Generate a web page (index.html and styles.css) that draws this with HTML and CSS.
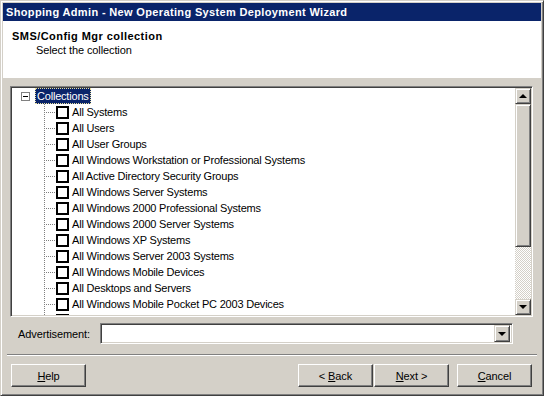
FILE: index.html
```html
<!DOCTYPE html>
<html>
<head>
<meta charset="utf-8">
<link rel="stylesheet" href="styles.css">
</head>
<body>
<div class="window">
  <div class="titlebar">Shopping Admin - New Operating System Deployment Wizard</div>
  <div class="header">
    <div class="h-title">SMS/Config Mgr collection</div>
    <div class="h-sub">Select the collection</div>
  </div>
  <div class="content">
    <div class="tree">
      <div class="tree-view">
        <div class="root-row">
          <span class="expander"><span class="minus"></span></span>
          <span class="root-label">Collections</span>
        </div>
        <ul class="children">
          <li><span class="conn"></span><span class="check"></span><span class="txt">All Systems</span></li>
          <li><span class="conn"></span><span class="check"></span><span class="txt">All Users</span></li>
          <li><span class="conn"></span><span class="check"></span><span class="txt">All User Groups</span></li>
          <li><span class="conn"></span><span class="check"></span><span class="txt">All Windows Workstation or Professional Systems</span></li>
          <li><span class="conn"></span><span class="check"></span><span class="txt">All Active Directory Security Groups</span></li>
          <li><span class="conn"></span><span class="check"></span><span class="txt">All Windows Server Systems</span></li>
          <li><span class="conn"></span><span class="check"></span><span class="txt">All Windows 2000 Professional Systems</span></li>
          <li><span class="conn"></span><span class="check"></span><span class="txt">All Windows 2000 Server Systems</span></li>
          <li><span class="conn"></span><span class="check"></span><span class="txt">All Windows XP Systems</span></li>
          <li><span class="conn"></span><span class="check"></span><span class="txt">All Windows Server 2003 Systems</span></li>
          <li><span class="conn"></span><span class="check"></span><span class="txt">All Windows Mobile Devices</span></li>
          <li><span class="conn"></span><span class="check"></span><span class="txt">All Desktops and Servers</span></li>
          <li><span class="conn"></span><span class="check"></span><span class="txt">All Windows Mobile Pocket PC 2003 Devices</span></li>
          <li><span class="conn"></span><span class="check"></span></li>
        </ul>
      </div>
      <div class="vscroll">
        <div class="sbtn"><span class="arrow-up"></span></div>
        <div class="thumb"></div>
        <div class="track"></div>
        <div class="sbtn"><span class="arrow-down"></span></div>
      </div>
    </div>
    <div class="adv-row">
      <span class="adv-label">Advertisement:</span>
      <div class="combo">
        <div class="combo-field"></div>
        <div class="combo-btn"><span class="arrow-down"></span></div>
      </div>
    </div>
  </div>
  <div class="sep"></div>
  <div class="buttons">
    <button class="btn"><u>H</u>elp</button>
    <span class="spacer"></span>
    <button class="btn">&lt; <u>B</u>ack</button>
    <button class="btn btn-next"><u>N</u>ext &gt;</button>
    <button class="btn btn-cancel"><u>C</u>ancel</button>
  </div>
</div>
</body>
</html>
```
FILE: styles.css
```css
html, body {
  margin: 0;
  padding: 0;
  background: #d4d0c8;
}

.window {
  width: 544px;
  height: 396px;
  box-sizing: border-box;
  background: #d4d0c8;
  border: 1px solid;
  border-color: #d4d0c8 #404040 #404040 #d4d0c8;
  box-shadow: inset 1px 1px #fff, inset -1px -1px #808080;
  padding: 2px;
  display: flex;
  flex-direction: column;
  font-family: "Liberation Sans", Arial, sans-serif;
  font-size: 11px;
  color: #000;
  overflow: hidden;
}

.titlebar {
  height: 18px;
  line-height: 18px;
  background: #0a246a;
  color: #fff;
  font-weight: bold;
  padding-left: 3px;
  white-space: nowrap;
  letter-spacing: 0.35px;
  flex: none;
}

.header {
  height: 57px;
  box-sizing: border-box;
  background: #fff;
  padding: 8px 0 0 9px;
  flex: none;
}

.h-title {
  font-weight: bold;
  line-height: 14px;
  letter-spacing: 0.45px;
}

.h-sub {
  line-height: 14px;
  padding-left: 24px;
  letter-spacing: -0.1px;
}

.content {
  padding: 8px 0 0 7px;
  flex: none;
}

.tree {
  width: 523px;
  height: 231px;
  box-sizing: border-box;
  border: 1px solid;
  border-color: #808080 #fff #fff #808080;
  box-shadow: inset 1px 1px #404040, inset -1px -1px #d4d0c8;
  padding: 1px;
  display: flex;
  background: #fff;
}

.tree-view {
  flex: 1;
  overflow: hidden;
  background: #fff;
  letter-spacing: -0.2px;
}

.root-row {
  height: 16px;
  display: flex;
  align-items: center;
}

.expander {
  width: 9px;
  height: 9px;
  box-sizing: border-box;
  border: 1px solid #808080;
  background: #fff;
  margin-left: 9px;
  display: flex;
  align-items: center;
  justify-content: center;
}

.minus {
  width: 5px;
  height: 1px;
  background: #000;
}

.root-label {
  margin-left: 5px;
  height: 16px;
  line-height: 14px;
  box-sizing: border-box;
  padding: 0 1px;
  background: #0a246a;
  color: #fff;
  border: 1px dotted #e8e0a0;
}

.children {
  list-style: none;
  margin: 0;
  padding: 0 0 0 32px;
}

.children li {
  height: 16px;
  display: flex;
  align-items: center;
  white-space: nowrap;
}

.conn {
  width: 12px;
  height: 16px;
  flex: none;
  background-image:
    repeating-linear-gradient(to bottom, #808080 0 1px, transparent 1px 2px),
    repeating-linear-gradient(to right, #808080 0 1px, transparent 1px 2px);
  background-size: 1px 100%, 9px 1px;
  background-position: 0 0, 2px 8px;
  background-repeat: no-repeat;
}

.check {
  width: 13px;
  height: 13px;
  box-sizing: border-box;
  border: 2px solid #000;
  background: #fff;
  flex: none;
}

.txt {
  margin-left: 3px;
  line-height: 16px;
}

.vscroll {
  width: 16px;
  display: flex;
  flex-direction: column;
  flex: none;
}

.sbtn, .thumb, .combo-btn {
  box-sizing: border-box;
  background: #d4d0c8;
  border: 1px solid;
  border-color: #d4d0c8 #404040 #404040 #d4d0c8;
  box-shadow: inset 1px 1px #fff, inset -1px -1px #808080;
  display: flex;
  align-items: center;
  justify-content: center;
}

.sbtn {
  height: 16px;
  flex: none;
}

.thumb {
  height: 143px;
  flex: none;
}

.track {
  flex: 1;
  background: repeating-conic-gradient(#fff 0 25%, #d4d0c8 0 50%) 0 0 / 2px 2px;
}

.arrow-up {
  width: 0;
  height: 0;
  border-left: 4px solid transparent;
  border-right: 4px solid transparent;
  border-bottom: 4px solid #000;
}

.arrow-down {
  width: 0;
  height: 0;
  border-left: 4px solid transparent;
  border-right: 4px solid transparent;
  border-top: 4px solid #000;
}

.adv-row {
  margin-top: 6px;
  height: 21px;
  display: flex;
  align-items: center;
}

.adv-label {
  width: 82px;
  padding-left: 8px;
  letter-spacing: -0.1px;
}

.combo {
  width: 413px;
  height: 21px;
  box-sizing: border-box;
  border: 1px solid;
  border-color: #808080 #fff #fff #808080;
  box-shadow: inset 1px 1px #404040, inset -1px -1px #d4d0c8;
  padding: 1px 2px 1px 1px;
  background: #fff;
  display: flex;
}

.combo-field {
  flex: 1;
}

.combo-btn {
  width: 16px;
  flex: none;
}

.sep {
  margin: 10px 4px 0 4px;
  border-top: 1px solid #808080;
  border-bottom: 1px solid #fff;
  flex: none;
}

.buttons {
  margin-top: 8px;
  padding: 0 9px 0 8px;
  height: 23px;
  display: flex;
  flex: none;
}

.spacer {
  flex: 1;
}

.btn {
  width: 75px;
  height: 23px;
  box-sizing: border-box;
  margin: 0;
  padding: 0;
  background: #d4d0c8;
  border: 1px solid;
  border-color: #fff #404040 #404040 #fff;
  box-shadow: inset -1px -1px #808080;
  font-family: "Liberation Sans", Arial, sans-serif;
  font-size: 11px;
  color: #000;
  letter-spacing: -0.1px;
}

.btn-next {
  margin-left: 1px;
}

.btn-cancel {
  margin-left: 8px;
}
```
